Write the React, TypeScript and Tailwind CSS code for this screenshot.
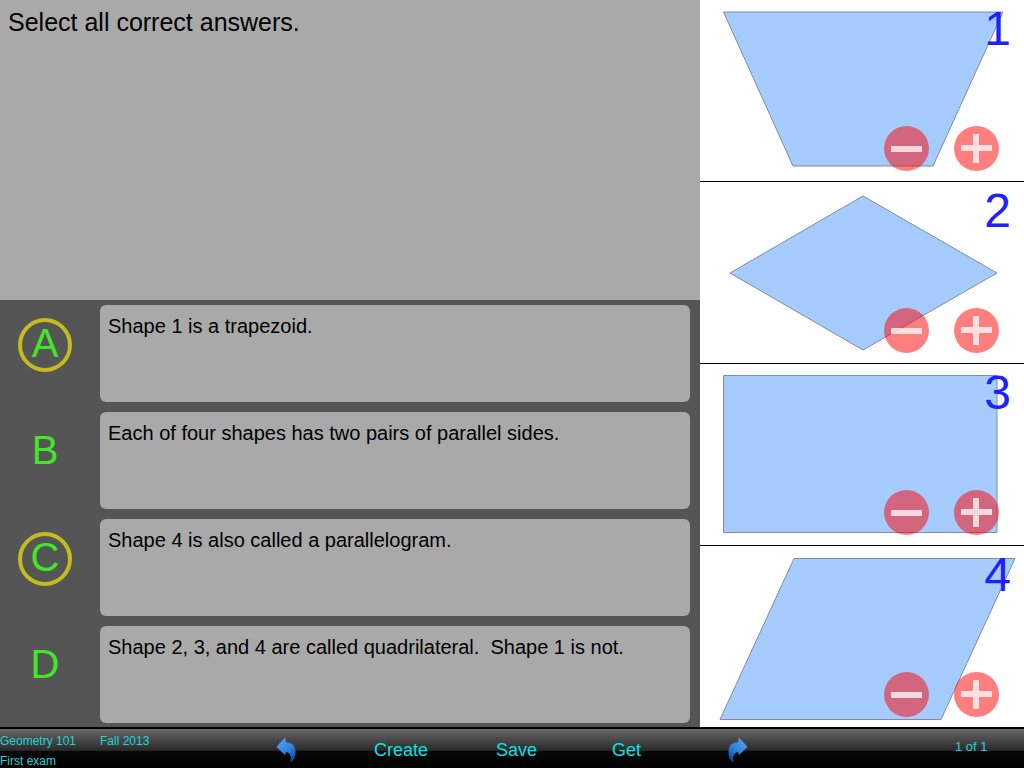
const font = { fontFamily: '"Liberation Sans", Arial, sans-serif' };

const answers = [
  { l: "A", t: "Shape 1 is a trapezoid.", on: true },
  { l: "B", t: "Each of four shapes has two pairs of parallel sides.", on: false },
  { l: "C", t: "Shape 4 is also called a parallelogram.", on: true },
  { l: "D", t: "Shape 2, 3, and 4 are called quadrilateral.\u00a0\u00a0Shape 1 is not.", on: false },
];

const shapes = [
  { n: "1", pts: "23.5,12 303,12 233,166 93,166", h: "h-[182px]" },
  { n: "2", pts: "163,14 297,91 163,168 30,91", h: "h-[182px]" },
  { n: "3", pts: "23.5,11.5 297,11.5 297,168.5 23.5,168.5", h: "h-[182px]" },
  { n: "4", pts: "94,12.5 315,12.5 241,173.5 20,173.5", h: "h-[182px]" },
];

function Arrow({ flip }: { flip?: boolean }) {
  const id = flip ? "ag2" : "ag1";
  return (
    <svg width="21" height="26" viewBox="0 0 22 27" className={flip ? "-scale-x-100" : ""}>
      <defs>
        <linearGradient id={id} x1="0" y1="0" x2="0.6" y2="1">
          <stop offset="0" stopColor="#5aa8f0" />
          <stop offset="0.6" stopColor="#2f86e0" />
          <stop offset="1" stopColor="#0f4fa8" />
        </linearGradient>
      </defs>
      <path
        d="M0.5 10 L9.5 0.5 L10.5 5.5 C17 5.5 20.5 9.5 20.5 15.5 C20.5 20 19 24 15 26.5 C16.5 22 15.5 16.5 10.5 15.5 L9.5 19 Z"
        fill={`url(#${id})`}
      />
    </svg>
  );
}

export default function App() {
  return (
    <div className="w-[1024px] h-[768px] flex flex-col overflow-hidden bg-white" style={font}>
      <div className="flex h-[727px]">
        <div className="w-[700px] flex flex-col">
          <div className="h-[300px] bg-[#a9a9a9] px-2 pt-[6px] text-[25px] leading-[32px] text-black">
            Select all correct answers.
          </div>
          <div className="flex-1 bg-[#555555] flex flex-col gap-[10px] pt-[5px] pr-[10px]">
            {answers.map((a) => (
              <div key={a.l} className="flex h-[97px]">
                <div className="w-[100px] flex justify-center">
                  <div
                    className={`w-[54px] h-[54px] mt-[13px] mr-[10px] pb-[4px] rounded-full flex items-center justify-center text-[40px] leading-none text-[#44e62a] border-[4px] ${
                      a.on ? "border-[#c2bc1e]" : "border-transparent"
                    }`}
                  >
                    {a.l}
                  </div>
                </div>
                <div className="flex-1 bg-[#a9a9a9] rounded-[6px] px-2 pt-[9px] text-[20px] leading-[24px] text-black">
                  {a.t}
                </div>
              </div>
            ))}
          </div>
        </div>
        <div className="w-[324px] flex flex-col">
          {shapes.map((s, i) => (
            <div
              key={s.n}
              className={`relative ${s.h} ${i < 3 ? "border-b border-black" : ""} bg-white`}
            >
              <svg width="324" height="181" viewBox="0 0 324 181" className="block">
                <polygon points={s.pts} fill="#a6ccff" stroke="#7f8c9c" strokeWidth="1" />
              </svg>
              <div className="absolute right-[13px] top-[2px] text-[48px] leading-[54px] text-[#2020ff]">
                {s.n}
              </div>
              <div className="absolute left-[184px] top-[126px] w-[45px] h-[45px] rounded-full bg-[#ff0000]/50 flex items-center justify-center">
                <div className="w-[31px] h-[6px] bg-white/75" />
              </div>
              <div className="absolute left-[254px] top-[126px] w-[45px] h-[45px] rounded-full bg-[#ff0000]/50 flex items-center justify-center">
                <div className="relative w-[31px] h-[29px]">
                  <div className="absolute left-0 top-[11px] w-[31px] h-[6px] bg-white/75" />
                  <div className="absolute left-[12px] top-0 w-[6px] h-[11px] bg-white/75" />
                  <div className="absolute left-[12px] top-[17px] w-[6px] h-[12px] bg-white/75" />
                </div>
              </div>
            </div>
          ))}
        </div>
      </div>
      <div className="h-[41px] border-t-2 border-black flex text-[#00e5e5] bg-[linear-gradient(to_bottom,#666666_0%,#2a2a2a_55%,#080808_56%,#000000_100%)]">
        <div className="w-[262px] text-[#1dd5d5] text-[12px] leading-[14px] pt-[5px]">
          <div className="flex h-[19px]">
            <span className="w-[100px]">Geometry 101</span>
            <span>Fall 2013</span>
          </div>
          <div className="mt-[2px] leading-[12px]">First exam</div>
        </div>
        <div className="w-[112px] pl-[14px] pt-[8px]">
          <Arrow />
        </div>
        <div className="w-[122px] text-[18px] leading-[22px] pt-[10px]">Create</div>
        <div className="w-[116px] text-[18px] leading-[22px] pt-[10px]">Save</div>
        <div className="w-[115px] text-[18px] leading-[22px] pt-[10px]">Get</div>
        <div className="w-[228px] pt-[8px]">
          <Arrow flip />
        </div>
        <div className="text-[13px] leading-[16px] pt-[10px] text-[#1dd5d5]">1 of 1</div>
      </div>
    </div>
  );
}
